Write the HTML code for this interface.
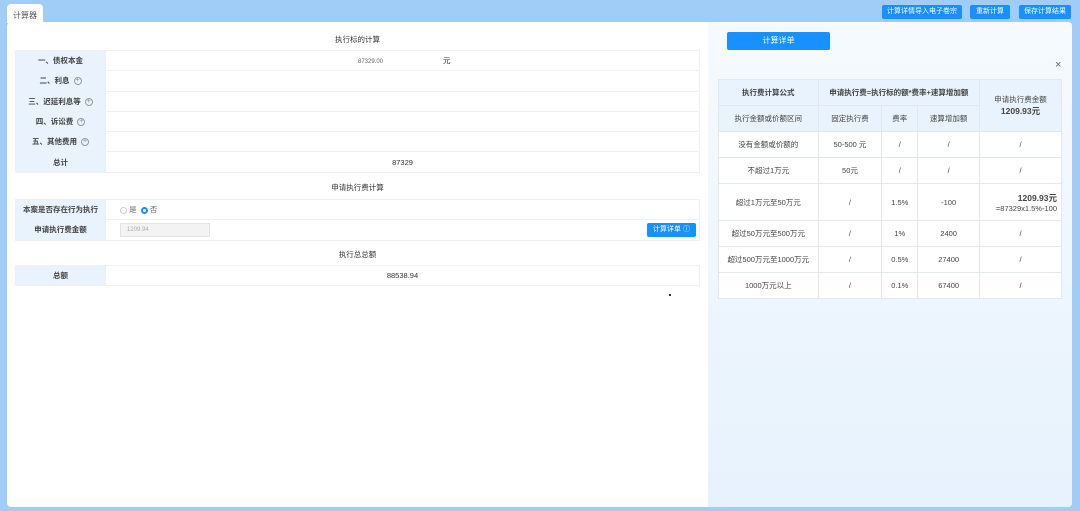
<!DOCTYPE html><html><head><meta charset="utf-8"><style>
*{margin:0;padding:0;box-sizing:border-box}
body{width:1080px;height:511px;overflow:hidden;background:#9fcdf8;font-family:"Liberation Sans","Noto Sans CJK SC",sans-serif;font-size:8px;color:#333;position:relative}
.abs{position:absolute}
.card{left:7px;top:22px;width:1065px;height:485px;background:#fff;border-radius:4px}
.right{left:708px;top:22px;width:364px;height:485px;background:linear-gradient(#f6fafe,#e6f2fd);border-radius:0 6px 4px 0}
.tab{left:7px;top:4px;width:36px;height:19px;background:#fff;border-radius:4px 4px 0 0;font-size:8px;padding:6px 0 0 6px;color:#555}
.btn{background:#1890ff;color:#fff;font-size:7px;text-align:center;border-radius:2px}
table{border-collapse:collapse;position:absolute}
.lt td{border:1px solid #eef0f3;height:20.3px;text-align:center;font-size:7.5px}
.lt td.l{background:#e8f3fd;width:90px;font-weight:bold;color:#444}
.h{font-size:7.5px;text-align:center;width:685px;left:15px;color:#333}
.rt td{border:1px solid #e3e8ee;text-align:center;font-size:7.5px;color:#444;background:#fff}
.rt tr.hd td{background:#e8f3fd}
.pl{display:inline-block;width:8px;height:8px;border:1px solid #999;border-radius:50%;font-size:7px;line-height:6px;vertical-align:middle;margin-left:4px;font-weight:normal;color:#888}
</style></head><body>
<div class="abs card"></div>
<div class="abs right"></div>
<div class="abs tab">计算器</div>
<div class="abs btn" style="left:882px;top:5px;width:80px;height:14px;line-height:14px">计算详情导入电子卷宗</div>
<div class="abs btn" style="left:970px;top:5px;width:40px;height:14px;line-height:14px">重新计算</div>
<div class="abs btn" style="left:1019px;top:5px;width:52px;height:14px;line-height:14px">保存计算结果</div>

<div class="abs h" style="top:34px">执行标的计算</div>
<table class="lt" style="left:15px;top:50px;width:685px">
<tr><td class="l">一、债权本金</td><td style="text-align:left;padding-left:252px"><span style="font-size:6px;color:#666">87329.00</span><span style="margin-left:60px">元</span></td></tr>
<tr><td class="l">二、利息<span class="pl">+</span></td><td></td></tr>
<tr><td class="l">三、迟延利息等<span class="pl">+</span></td><td></td></tr>
<tr><td class="l">四、诉讼费<span class="pl">+</span></td><td></td></tr>
<tr><td class="l">五、其他费用<span class="pl">+</span></td><td></td></tr>
<tr><td class="l">总计</td><td>87329</td></tr>
</table>
<div class="abs h" style="top:182px">申请执行费计算</div>
<table class="lt" style="left:15px;top:199px;width:685px">
<tr><td class="l">本案是否存在行为执行</td><td style="text-align:left;padding-left:14px;color:#666"><span style="display:inline-block;width:7px;height:7px;border:1px solid #ccc;border-radius:50%;vertical-align:middle"></span> 是 &nbsp;<span style="display:inline-block;width:7px;height:7px;border:2px solid #1890ff;border-radius:50%;vertical-align:middle"></span> 否</td></tr>
<tr><td class="l">申请执行费金额</td><td style="text-align:left;padding-left:14px;position:relative"><span style="display:inline-block;width:90px;height:14px;background:#f3f3f3;border:1px solid #e3e3e3;font-size:6px;color:#aaa;line-height:12px;padding-left:6px">1209.94</span><span class="btn" style="position:absolute;right:3px;top:3px;width:49px;height:14px;line-height:14px">计算详单 ⓘ</span></td></tr>
</table>
<div class="abs h" style="top:249px">执行总总额</div>
<table class="lt" style="left:15px;top:265px;width:685px">
<tr><td class="l">总额</td><td>88538.94</td></tr>
</table>
<div class="abs" style="left:669px;top:294px;width:2px;height:2px;background:#333"></div>

<div class="abs btn" style="left:727px;top:32px;width:103px;height:18px;line-height:18px;font-size:8px">计算详单</div>
<div class="abs" style="left:1055px;top:59px;font-size:11px;color:#666">×</div>
<table class="rt" style="left:718px;top:79px;width:344px">
<colgroup><col style="width:100px"><col style="width:64px"><col style="width:36px"><col style="width:62px"><col style="width:82px"></colgroup>
<tr class="hd" style="height:26px"><td style="font-weight:bold">执行费计算公式</td><td colspan="3" style="font-weight:bold">申请执行费=执行标的额*费率+速算增加额</td><td rowspan="2">申请执行费金额<br><b style="font-size:8.5px">1209.93元</b></td></tr>
<tr class="hd" style="height:26px"><td>执行金额或价额区间</td><td>固定执行费</td><td>费率</td><td>速算增加额</td></tr>
<tr style="height:26px"><td>没有金额或价额的</td><td>50-500 元</td><td>/</td><td>/</td><td>/</td></tr>
<tr style="height:26px"><td>不超过1万元</td><td>50元</td><td>/</td><td>/</td><td>/</td></tr>
<tr style="height:37px"><td>超过1万元至50万元</td><td>/</td><td>1.5%</td><td>-100</td><td style="text-align:right;padding-right:4px"><b style="font-size:8.5px">1209.93元</b><br>=87329x1.5%-100</td></tr>
<tr style="height:26px"><td>超过50万元至500万元</td><td>/</td><td>1%</td><td>2400</td><td>/</td></tr>
<tr style="height:26px"><td>超过500万元至1000万元</td><td>/</td><td>0.5%</td><td>27400</td><td>/</td></tr>
<tr style="height:26px"><td>1000万元以上</td><td>/</td><td>0.1%</td><td>67400</td><td>/</td></tr>
</table>
</body></html>
